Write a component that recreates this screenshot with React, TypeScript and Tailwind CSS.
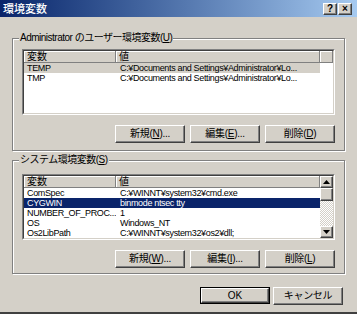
import type { ReactNode } from 'react'

const raised =
  'bg-[#d4d0c8] border border-t-white border-l-white border-r-[#404040] border-b-[#404040] shadow-[inset_-1px_-1px_0_#808080]'

function Btn({ children, def }: { children: ReactNode; def?: boolean }) {
  if (def) {
    return (
      <div className="w-[70px] h-[17px] border border-black flex">
        <div className={`${raised} flex-1 flex items-center justify-center text-[10px] leading-none`}>{children}</div>
      </div>
    )
  }
  return (
    <div className={`${raised} w-[70px] h-[18px] flex items-center justify-center text-[10px] leading-none tracking-[-0.3px]`}>
      {children}
    </div>
  )
}

function Group({ label, className, children }: { label: ReactNode; className: string; children: ReactNode }) {
  return (
    <div
      className={`relative mx-[12px] border border-[#808080] shadow-[inset_1px_1px_0_#fff,1px_1px_0_#fff] px-[9px] ${className}`}
    >
      <span className="absolute -top-[7px] left-[6px] bg-[#d4d0c8] px-[1px] text-[10px] leading-[12px] tracking-[-0.5px] whitespace-nowrap">
        {label}
      </span>
      {children}
    </div>
  )
}

function Sunken({ children }: { children: ReactNode }) {
  return (
    <div className="h-[66px] border border-t-[#808080] border-l-[#808080] border-r-white border-b-white">
      <div className="h-full border border-t-[#404040] border-l-[#404040] border-r-[#d4d0c8] border-b-[#d4d0c8] bg-white overflow-hidden">
        {children}
      </div>
    </div>
  )
}

const headCell = 'h-[12px] border-r border-b border-r-[#808080] border-b-[#808080] shadow-[inset_1px_1px_0_#fff] bg-[#d4d0c8]'

function Header({ blank }: { blank?: boolean }) {
  return (
    <div className="flex text-[10px] leading-[11px]">
      <div className={`${headCell} w-[92px] shrink-0 pl-[3px]`}>変数</div>
      <div className={`${headCell} w-[204px] shrink-0 pl-[3px]`}>値</div>
      {blank && <div className={`${headCell} flex-1`} />}
    </div>
  )
}

function Row({ name, value, sel }: { name: string; value: string; sel?: 'grey' | 'blue' }) {
  const bg = sel === 'grey' ? 'bg-[#d4d0c8]' : sel === 'blue' ? 'bg-[#0a246a] text-white' : ''
  return (
    <div className={`flex w-[296px] h-[10px] text-[9px] leading-[10px] tracking-[-0.35px] whitespace-nowrap ${bg}`}>
      <div className="w-[92px] shrink-0 pl-[3px] overflow-hidden">{name}</div>
      <div className="w-[204px] shrink-0 pl-[4px] overflow-hidden">{value}</div>
    </div>
  )
}

function Arrow({ down }: { down?: boolean }) {
  return (
    <div className={`${raised} h-[12px] flex items-center justify-center`}>
      <svg width="7" height="4" viewBox="0 0 7 4">
        {down ? <path d="M0 0H7L3.5 4Z" fill="#000" /> : <path d="M0 4H7L3.5 0Z" fill="#000" />}
      </svg>
    </div>
  )
}

export default function App() {
  return (
    <div className="w-[357px] h-[314px] bg-[#d4d0c8] flex flex-col overflow-hidden text-black border-b-2 border-b-[#404040] [font-family:'Liberation_Sans','Noto_Sans_CJK_JP',sans-serif]">
      {/* title bar */}
      <div className="h-[17px] shrink-0 flex items-center bg-gradient-to-r from-[#0a246a] to-[#a6caf0] pl-[3px] pr-[5px]">
        <span className="text-white text-[11px] font-medium leading-none [font-family:'Noto_Sans_CJK_JP',sans-serif]">
          環境変数
        </span>
        <div className="ml-auto flex gap-[1px]">
          <div className={`${raised} w-[14px] h-[12px] flex items-center justify-center text-[10px] font-bold leading-none`}>?</div>
          <div className={`${raised} w-[14px] h-[12px] flex items-center justify-center text-[10px] font-bold leading-none`}>×</div>
        </div>
      </div>

      {/* user variables */}
      <Group
        className="mt-[21px] pt-[10px] pb-[7px]"
        label={
          <>
            Administrator のユーザー環境変数(<u>U</u>)
          </>
        }
      >
        <Sunken>
          <Header blank />
          <Row name="TEMP" value="C:¥Documents and Settings¥Administrator¥Lo..." sel="grey" />
          <Row name="TMP" value="C:¥Documents and Settings¥Administrator¥Lo..." />
        </Sunken>
        <div className="flex justify-end gap-[5px] mt-[10px]">
          <Btn>新規(<u>N</u>)...</Btn>
          <Btn>編集(<u>E</u>)...</Btn>
          <Btn>削除(<u>D</u>)</Btn>
        </div>
      </Group>

      {/* system variables */}
      <Group
        className="mt-[9px] pt-[13px] pb-[5px]"
        label={
          <>
            システム環境変数(<u>S</u>)
          </>
        }
      >
        <Sunken>
          <div className="flex h-full">
            <div className="flex-1">
              <Header />
              <Row name="ComSpec" value="C:¥WINNT¥system32¥cmd.exe" />
              <Row name="CYGWIN" value="binmode ntsec tty" sel="blue" />
              <Row name="NUMBER_OF_PROC..." value="1" />
              <Row name="OS" value="Windows_NT" />
              <Row name="Os2LibPath" value="C:¥WINNT¥system32¥os2¥dll;" />
            </div>
            <div className="w-[13px] flex flex-col">
              <Arrow />
              <div className={`${raised} h-[13px]`} />
              <div className="flex-1 bg-[repeating-conic-gradient(#ffffff_0_25%,#d4d0c8_0_50%)] bg-[length:2px_2px]" />
              <Arrow down />
            </div>
          </div>
        </Sunken>
        <div className="flex justify-end gap-[5px] mt-[10px]">
          <Btn>新規(<u>W</u>)...</Btn>
          <Btn>編集(<u>I</u>)...</Btn>
          <Btn>削除(<u>L</u>)</Btn>
        </div>
      </Group>

      {/* dialog buttons */}
      <div className="flex justify-end gap-[3px] mt-[13px] mr-[14px]">
        <Btn def>OK</Btn>
        <Btn>キャンセル</Btn>
      </div>
    </div>
  )
}
